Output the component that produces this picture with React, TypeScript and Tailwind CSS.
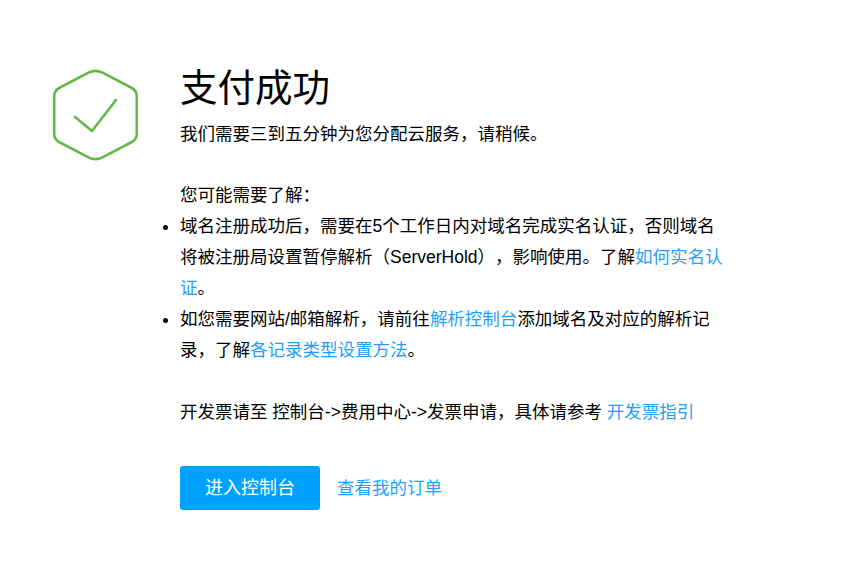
const cjk = '"Liberation Sans", "Noto Sans CJK SC", sans-serif'

function Badge() {
  return (
    <svg width="86" height="94" viewBox="0 0 86 94" fill="none" className="block">
      <path
        d="M36.5 3.7 Q43.5 0 50.5 3.7 L79 18.5 Q84.8 21.5 84.8 27 V65 Q84.8 70.5 79 73.5 L50.5 88.3 Q43.5 92 36.5 88.3 L8 73.5 Q2.2 70.5 2.2 65 V27 Q2.2 21.5 8 18.5 Z"
        stroke="#62b94a"
        strokeWidth="2.6"
      />
      <path d="M23 48 L40 62 L64 31" stroke="#62b94a" strokeWidth="2.6" strokeLinecap="round" strokeLinejoin="round" />
    </svg>
  )
}

export default function App() {
  return (
    <div className="w-[849px] h-[569px] bg-white flex items-start pl-[52px] pt-[69px] text-black" style={{ fontFamily: cjk }}>
      <div className="w-[128px] shrink-0">
        <Badge />
      </div>
      <div className="w-[545px] text-[17.5px] leading-[31px] [text-spacing-trim:space-all]">
        <h1 className="text-[37.5px] leading-[38px] font-normal">支付成功</h1>
        <p className="mt-[12px]">我们需要三到五分钟为您分配云服务，请稍候。</p>
        <p className="mt-[30px]">您可能需要了解：</p>
        <ul className="list-disc">
          <li>
            域名注册成功后，需要在5个工作日内对域名完成实名认证，否则域名将被注册局设置暂停解析（ServerHold），影响使用。了解
            <span className="text-[#1ea0ff]">如何实名认证</span>。
          </li>
          <li>
            如您需要网站/邮箱解析，请前往<span className="text-[#1ea0ff]">解析控制台</span>添加域名及对应的解析记录，了解
            <span className="text-[#1ea0ff]">各记录类型设置方法</span>。
          </li>
        </ul>
        <p className="mt-[31px]">
          开发票请至 控制台-&gt;费用中心-&gt;发票申请，具体请参考 <span className="text-[#1ea0ff]">开发票指引</span>
        </p>
        <div className="mt-[38px] flex items-center">
          <div className="w-[140px] h-[44px] rounded-[3px] bg-[#00a2ff] text-white text-[18px] flex items-center justify-center">进入控制台</div>
          <span className="ml-[17px] text-[17.5px] text-[#1ea0ff]">查看我的订单</span>
        </div>
      </div>
    </div>
  )
}
